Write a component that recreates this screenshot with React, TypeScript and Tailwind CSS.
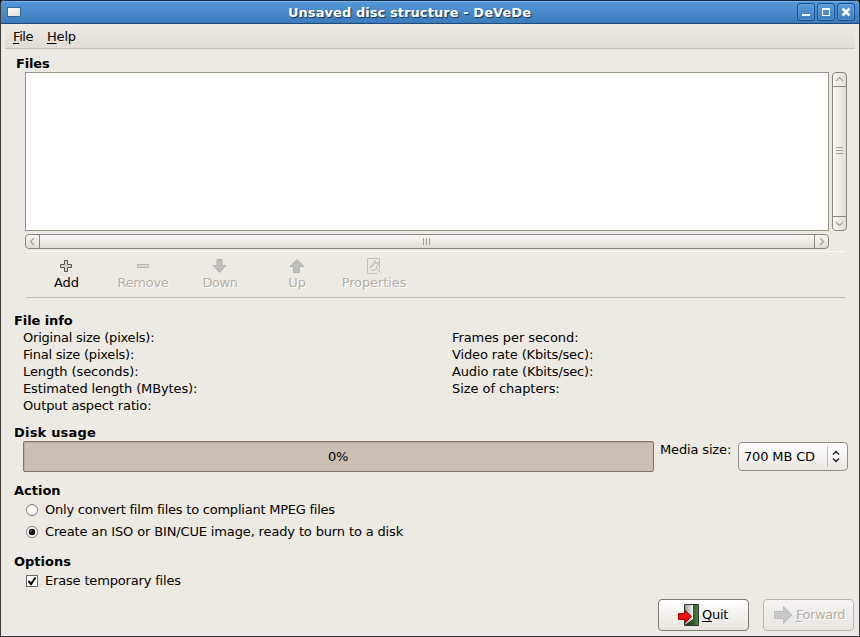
import type { ReactNode } from "react";

function Heading({ children, className = "" }: { children: ReactNode; className?: string }) {
  return <h2 className={`h-[17px] whitespace-nowrap text-[13px] font-bold leading-[17px] ${className}`}>{children}</h2>;
}

function WindowButton({ children }: { children: ReactNode }) {
  return (
    <button className="flex h-[18px] w-[18px] items-center justify-center rounded-[3px] border border-[#1d4f86] bg-linear-to-b from-[#5a9ddb] to-[#3a7cbd] shadow-[inset_0_0_0_1px_rgba(120,180,235,0.4)]">
      <svg width="16" height="16" viewBox="0 0 16 16" fill="none" stroke="#fff" strokeWidth="2">
        {children}
      </svg>
    </button>
  );
}

function TitleBar() {
  return (
    <header className="flex h-6 items-center border-b border-t border-b-[#1f4a7a] border-t-[#152c4c] bg-linear-to-b from-[#5598d8] to-[#3b7cbc] shadow-[inset_0_1px_0_#76afe5]">
      <div className="ml-1.5 h-[10px] w-[14px] border border-[#39658f] bg-linear-to-br from-white to-[#dedbd6]" />
      <div className="flex-1 pl-[1px] pt-[2px] text-center text-[13px] font-bold leading-[20px] tracking-[0.07px] text-white [text-shadow:1px_1px_1px_#16324f]">
        Unsaved disc structure - DeVeDe
      </div>
      <div className="mr-[4px] flex gap-[2px]">
        <WindowButton><path d="M4 11h8" /></WindowButton>
        <WindowButton><path d="M4 4h8v8H4zM5 6v5h6V6z" fill="#fff" fillRule="evenodd" stroke="none" /></WindowButton>
        <WindowButton><path d="M4.500 4.500l7 7M11.500 4.500l-7 7" strokeWidth="2.500" /></WindowButton>
      </div>
    </header>
  );
}

function MenuBar() {
  return (
    <nav className="mx-[4px] flex h-[25px] border-b border-[#c6c0b5] bg-linear-to-b from-[#eeebe6] to-[#e2ddd6] pl-2 pt-1 text-[13px] leading-[17px]">
      <span className="w-[34px] tracking-[-0.4px]"><u className="underline-offset-2">F</u>ile</span>
      <span className="tracking-[-0.2px]"><u className="underline-offset-2">H</u>elp</span>
    </nav>
  );
}

function Chevron({ d }: { d: string }) {
  return (
    <svg width="13" height="13" viewBox="0 0 13 13" fill="none" stroke="#aaa49a" strokeWidth="1.3">
      <path d={d} />
    </svg>
  );
}

function VerticalScrollbar() {
  return (
    <div className="flex h-[159px] w-[15px] flex-col rounded-[4px] border border-[#8d8579] bg-linear-to-r from-[#faf9f7] to-[#e2dcd4]">
      <div className="h-[13px]"><Chevron d="M3 8l3.500-3.500L10 8" /></div>
      <div className="flex flex-1 flex-col items-center justify-center gap-[2px] border-y border-[#8d8579] pb-[2px]">
        <i className="h-px w-[7px] bg-[#a59e93]" />
        <i className="h-px w-[7px] bg-[#a59e93]" />
        <i className="h-px w-[7px] bg-[#a59e93]" />
      </div>
      <div className="h-[13px]"><Chevron d="M3 5l3.500 3.500L10 5" /></div>
    </div>
  );
}

function HorizontalScrollbar() {
  return (
    <div className="flex h-[15px] w-[804px] rounded-[4px] border border-[#8d8579] bg-linear-to-b from-[#faf9f7] to-[#e2dcd4]">
      <div className="w-[13px]"><Chevron d="M8 3L4.500 6.500 8 10" /></div>
      <div className="flex flex-1 items-center justify-center gap-[2px] border-x border-[#8d8579] pr-[2px]">
        <i className="h-[7px] w-px bg-[#a59e93]" />
        <i className="h-[7px] w-px bg-[#a59e93]" />
        <i className="h-[7px] w-px bg-[#a59e93]" />
      </div>
      <div className="w-[13px]"><Chevron d="M5 3l3.500 3.500L5 10" /></div>
    </div>
  );
}

function Tool({ label, disabled, labelClass = "pl-[2px]", children }: { label: string; disabled?: boolean; labelClass?: string; children: ReactNode }) {
  return (
    <button className={`flex w-[77px] flex-col items-center text-[13px] leading-[17px] ${disabled ? "text-[#b5afa5] [text-shadow:1px_1px_0_#fff]" : "text-black"}`}>
      <svg width="16" height="16" viewBox="0 0 16 16" className="mt-[6px]">{children}</svg>
      <span className={labelClass}>{label}</span>
    </button>
  );
}

function Toolbar() {
  return (
    <div className="ml-[25px] flex h-[47px] w-[819px] border-b border-t border-b-[#c3beb5] border-t-[#fbfaf8] pl-[1px]">
      <Tool label="Add">
        <path d="M6.500 2.500h3v4h4v3h-4v4h-3v-4h-4v-3h4z" fill="#d3d3d0" stroke="#555753" />
      </Tool>
      <Tool label="Remove" labelClass="pl-[1px] tracking-[-0.3px]" disabled>
        <rect x="2.500" y="6.500" width="11" height="3" fill="#d9d7d1" stroke="#b9b6b0" />
      </Tool>
      <Tool label="Down" labelClass="pl-[1px] tracking-[-0.4px]" disabled>
        <path d="M5 1.500h5v6h4L7.500 14.500 1 7.500h4z" fill="#bebebb" stroke="#b3b3b0" />
      </Tool>
      <Tool label="Up" labelClass="pl-[1px] tracking-[-0.2px]" disabled>
        <path d="M4.500 14.500h6v-6H15L8 1.500 1 8.500h3.500z" fill="#bebebb" stroke="#b3b3b0" />
      </Tool>
      <Tool label="Properties" labelClass="pl-[1px] tracking-[-0.1px]" disabled>
        <path d="M13.500 11V.500h-12v15h10" fill="#eceae4" stroke="#c2c0bb" />
        <path d="M4 9.500c0-2 2-2.500 3.500-2.500M5 12c3 1 5.500-.500 5.500-3.500 2-1 2.500-3 1.500-4.500l-2 2-1.500-1.500 1.500-1.500C8 3 6.500 5 7.500 7L4 10.500M10.500 10.500l4 4" fill="none" stroke="#b8b6b1" />
      </Tool>
    </div>
  );
}

type InfoRow = [text: string, tracking: string];

const fileRows: InfoRow[] = [
  ["Original size (pixels):", "tracking-[-0.22px]"],
  ["Final size (pixels):", "tracking-[-0.22px]"],
  ["Length (seconds):", "tracking-[-0.07px]"],
  ["Estimated length (MBytes):", "tracking-[-0.13px]"],
  ["Output aspect ratio:", "tracking-[-0.13px]"],
];

const rateRows: InfoRow[] = [
  ["Frames per second:", "tracking-[-0.08px]"],
  ["Video rate (Kbits/sec):", "tracking-[-0.13px]"],
  ["Audio rate (Kbits/sec):", "tracking-[-0.15px]"],
  ["Size of chapters:", "tracking-[-0.06px]"],
];

function InfoColumn({ rows }: { rows: InfoRow[] }) {
  return (
    <div className="flex w-[429px] shrink-0 flex-col">
      {rows.map(([text, tracking]) => <span key={text} className={`h-[17px] whitespace-nowrap ${tracking}`}>{text}</span>)}
    </div>
  );
}

function DiskUsage() {
  return (
    <div className="ml-[22px] flex h-[31px] leading-[17px]">
      <div className="flex w-[631px] items-center justify-center rounded-[2px] border border-[#807669] bg-[#cabfb1] pr-[1px] tracking-[-0.2px] shadow-[inset_1px_1px_0_#b9ad9f]">0%</div>
      <span className="ml-[6px] w-[78px] whitespace-nowrap tracking-[-0.15px]">Media size:</span>
      <button className="mt-[1px] flex h-[29px] w-[110px] items-center rounded-[4px] border border-[#978f84] bg-linear-to-b from-white to-[#ebe7e2] pl-[5px]">
        <span className="w-[83px] whitespace-nowrap text-left tracking-[-0.15px]">700 MB CD</span>
        <i className="h-[21px] w-px bg-[#c1bbb1]" />
        <svg width="12" height="16" viewBox="0 0 12 16" className="ml-[2px]" fill="none" stroke="#222" strokeWidth="1.500">
          <path d="M3 5.500l3-3 3 3M3 9.500l3 3 3-3" />
        </svg>
      </button>
    </div>
  );
}

function Radio({ label, selected, labelClass }: { label: string; selected?: boolean; labelClass: string }) {
  return (
    <label className="flex h-[22px] items-center whitespace-nowrap pl-[24px]">
      <svg width="14" height="14" viewBox="0 0 14 14">
        <circle cx="7" cy="7" r="5.500" fill="#fff" stroke="#7f7a72" />
        {selected && <circle cx="7" cy="7" r="3.200" fill="#111" />}
        {selected && <circle cx="6" cy="6" r=".8" fill="#888" />}
      </svg>
      <span className={`ml-[6px] pb-[2px] ${labelClass}`}>{label}</span>
    </label>
  );
}

function Actions() {
  return (
    <footer className="mt-[8px] flex h-8 justify-end gap-[14px] pr-[5px]">
      <button className="flex h-8 w-[91px] items-center rounded-[4px] border border-[#81796e] bg-linear-to-b from-white to-[#e8e3dd] pl-[18px]">
        <svg width="24" height="24" viewBox="0 0 24 24">
          <defs>
            <linearGradient id="outside" x2="1"><stop stopColor="#153316" /><stop offset=".55" stopColor="#20541e" /><stop offset="1" stopColor="#5b884b" /></linearGradient>
            <linearGradient id="door" x2="1"><stop stopColor="#9e9f9c" /><stop offset="1" stopColor="#f3f3f0" /></linearGradient>
          </defs>
          <path d="M7.500 1.500h14v21h-14z" fill="url(#outside)" stroke="#303330" />
          <path d="M8 2h8v14l-8 6z" fill="url(#door)" />
          <path d="M1.500 10.500H8V7.200l6.500 6.300L8 20v-3.500H1.500z" fill="#ee1111" stroke="#a70000" />
        </svg>
        <span className="ml-[1px] pb-[2px] tracking-[-0.3px]"><u className="underline-offset-2">Q</u>uit</span>
      </button>
      <button className="flex h-8 w-[91px] items-center rounded-[4px] border border-[#bbb5ab] bg-linear-to-b from-[#f5f3f0] to-[#e9e5df] pl-[8px] text-[#b5afa5] [text-shadow:1px_1px_0_#fff]">
        <svg width="24" height="24" viewBox="0 0 24 24">
          <path d="M2.500 8.500h9v-5l8.500 8.500-8.500 8.500v-5h-9z" fill="#c8c8c5" stroke="#bcbcb9" />
        </svg>
        <span className="pb-[2px] tracking-[-0.45px]"><u className="underline-offset-2">F</u>orward</span>
      </button>
    </footer>
  );
}

export default function App() {
  return (
    <div className="h-[637px] w-[860px] overflow-hidden bg-[#15191f] font-['DejaVu_Sans',sans-serif] text-[13px] leading-[17px] text-black">
      <div className="flex h-full flex-col overflow-hidden rounded-t-[5px] border-x border-b border-[#3b3836] bg-[#edeae3]">
        <TitleBar />
        <MenuBar />
        <main className="flex flex-col">
          <Heading className="ml-[15px] mt-[6px] tracking-[-0.15px]">Files</Heading>
          <div className="ml-[24px] flex gap-[3px]">
            <div className="h-[159px] w-[804px] border border-[#999287] bg-white" />
            <VerticalScrollbar />
          </div>
          <div className="ml-[24px] mt-[3px]"><HorizontalScrollbar /></div>
          <div className="mt-[2px]"><Toolbar /></div>
          <Heading className="ml-[13px] mt-[14px] tracking-[-0.1px]">File info</Heading>
          <div className="ml-[22px] flex h-[85px]">
            <InfoColumn rows={fileRows} />
            <InfoColumn rows={rateRows} />
          </div>
          <Heading className="ml-[13px] mt-[10px] tracking-[0.2px]">Disk usage</Heading>
          <DiskUsage />
          <Heading className="ml-[13px] mt-[10px]">Action</Heading>
          <Radio label="Only convert film files to compliant MPEG files" labelClass="tracking-[-0.23px]" />
          <Radio label="Create an ISO or BIN/CUE image, ready to burn to a disk" labelClass="tracking-[-0.14px]" selected />
          <Heading className="ml-[13px] mt-[10px]">Options</Heading>
          <label className="flex h-[21px] items-center pl-[25px]">
            <svg width="12" height="12" viewBox="0 0 12 12">
              <rect x=".5" y=".5" width="11" height="11" fill="#fff" stroke="#6f6a62" />
              <path d="M2.500 6l2.500 3L9.500 2.500" fill="none" stroke="#000" strokeWidth="2" />
            </svg>
            <span className="ml-[7px] tracking-[-0.17px]">Erase temporary files</span>
          </label>
          <Actions />
        </main>
      </div>
    </div>
  );
}
